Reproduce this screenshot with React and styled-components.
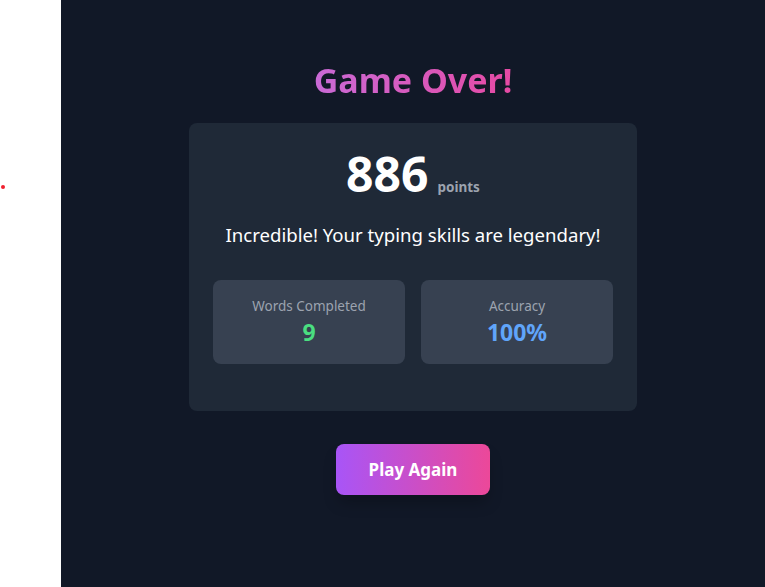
import styled, { createGlobalStyle } from 'styled-components';

const stats = [
  { label: 'Words Completed', value: '9', color: '#4ade80' },
  { label: 'Accuracy', value: '100%', color: '#60a5fa' },
];

function App() {
  return (
    <>
      <GlobalStyle />
      <Page>
        <Gutter>
          <Dot />
        </Gutter>
        <Stage>
          <Title>Game Over!</Title>
          <Card>
            <ScoreLine>
              <Score>886</Score>
              <ScoreUnit>points</ScoreUnit>
            </ScoreLine>
            <Message>Incredible! Your typing skills are legendary!</Message>
            <StatGrid>
              {stats.map((s) => (
                <StatBox key={s.label}>
                  <StatLabel>{s.label}</StatLabel>
                  <StatValue $color={s.color}>{s.value}</StatValue>
                </StatBox>
              ))}
            </StatGrid>
          </Card>
          <PlayButton>Play Again</PlayButton>
        </Stage>
      </Page>
    </>
  );
}

const GlobalStyle = createGlobalStyle`
  html, body {
    margin: 0;
    padding: 0;
    height: 100%;
  }
  body {
    font-family: "Noto Sans", "Open Sans", sans-serif;
  }
  #root {
    height: 100%;
  }
`;

const Page = styled.div`
  display: flex;
  height: 587px;
  background: #ffffff;
`;

const Gutter = styled.div`
  width: 61px;
  flex-shrink: 0;
  display: flex;
  align-items: flex-start;
  padding-top: 185px;
  box-sizing: border-box;
`;

const Dot = styled.span`
  display: block;
  width: 4px;
  height: 4px;
  margin-left: 1px;
  border-radius: 50%;
  background: #f0202f;
`;

const Stage = styled.main`
  flex: 1;
  background: #111827;
  display: flex;
  flex-direction: column;
  align-items: center;
  padding-top: 60px;
`;

const Title = styled.h1`
  margin: 0 0 23px;
  font-size: 34px;
  line-height: 40px;
  font-weight: 700;
  background: linear-gradient(90deg, #c96ad6, #e64aa4);
  -webkit-background-clip: text;
  background-clip: text;
  color: transparent;
`;

const Card = styled.section`
  width: 448px;
  box-sizing: border-box;
  padding: 24px 24px 47px;
  background: #1f2937;
  border-radius: 8px;
  display: flex;
  flex-direction: column;
  align-items: center;
`;

const ScoreLine = styled.div`
  display: flex;
  align-items: baseline;
  justify-content: center;
  gap: 9px;
  margin: 3px 0 23px;
  height: 48px;
`;

const Score = styled.span`
  font-size: 48px;
  line-height: 48px;
  font-weight: 700;
  color: #ffffff;
`;

const ScoreUnit = styled.span`
  font-size: 13.5px;
  font-weight: 700;
  color: #9ca3af;
`;

const Message = styled.p`
  margin: 0 0 31px;
  font-size: 18.6px;
  line-height: 28px;
  color: #ffffff;
`;

const StatGrid = styled.div`
  align-self: stretch;
  display: grid;
  grid-template-columns: 1fr 1fr;
  gap: 16px;
`;

const StatBox = styled.div`
  height: 84px;
  box-sizing: border-box;
  background: #374151;
  border-radius: 8px;
  padding: 16px;
  display: flex;
  flex-direction: column;
  align-items: center;
`;

const StatLabel = styled.div`
  font-size: 13.5px;
  line-height: 20px;
  color: #9ca3af;
`;

const StatValue = styled.div`
  font-size: 23px;
  line-height: 32px;
  font-weight: 700;
  color: ${(p) => p.$color};
`;

const PlayButton = styled.button`
  margin-top: 33px;
  width: 154px;
  height: 51px;
  border: none;
  border-radius: 8px;
  background: linear-gradient(90deg, #a855f7, #ec4899);
  color: #ffffff;
  font-family: inherit;
  font-size: 17px;
  font-weight: 700;
  cursor: pointer;
  box-shadow: 0 10px 15px -3px rgba(0, 0, 0, 0.25);
`;

export default App;
